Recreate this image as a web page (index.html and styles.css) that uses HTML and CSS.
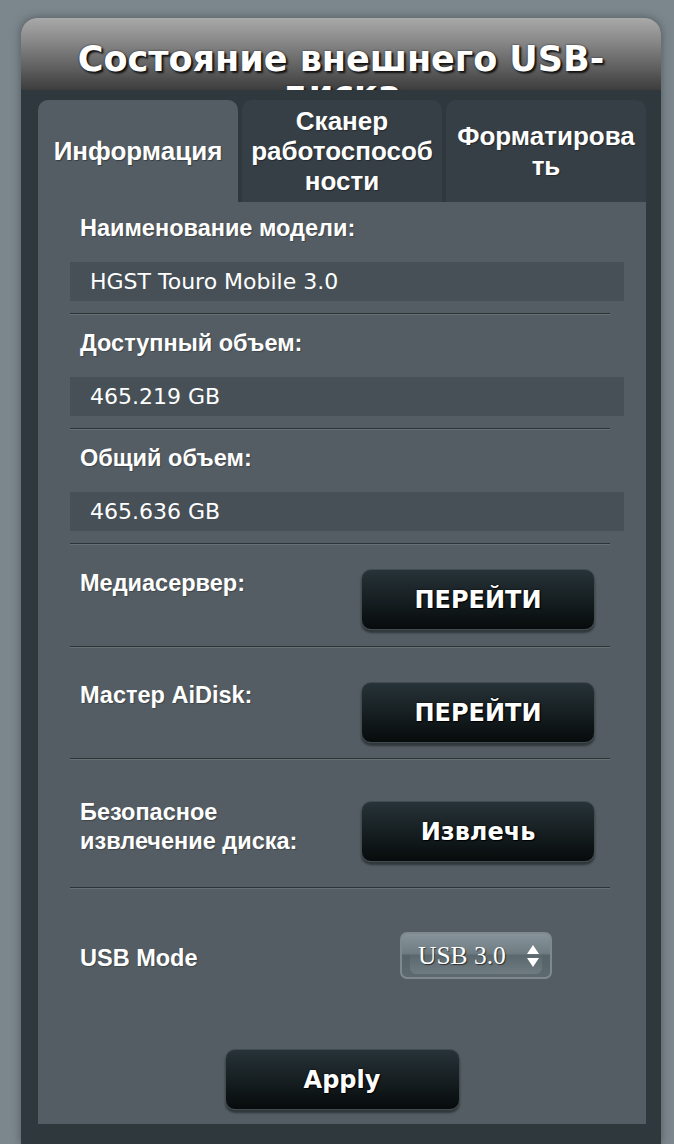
FILE: index.html
```html
<!DOCTYPE html>
<html lang="ru">
<head>
<meta charset="utf-8">
<title>Состояние внешнего USB-диска</title>
<link rel="stylesheet" href="styles.css">
</head>
<body>
<div class="panel">
  <div class="head">
    <h1 class="title">Состояние внешнего USB-диска</h1>
  </div>
  <div class="tabs">
    <div class="tab tab-active">Информация</div>
    <div class="tab">Сканер работоспособности</div>
    <div class="tab">Форматировать</div>
  </div>
  <div class="content">
    <div class="label">Наименование модели:</div>
    <div class="value">HGST Touro Mobile 3.0</div>
    <div class="sep"></div>

    <div class="label">Доступный объем:</div>
    <div class="value">465.219 GB</div>
    <div class="sep"></div>

    <div class="label">Общий объем:</div>
    <div class="value">465.636 GB</div>
    <div class="sep"></div>

    <div class="brow brow-media">
      <div class="blabel">Медиасервер:</div>
      <div class="btn">ПЕРЕЙТИ</div>
    </div>
    <div class="sep"></div>

    <div class="brow brow-aidisk">
      <div class="blabel">Мастер AiDisk:</div>
      <div class="btn">ПЕРЕЙТИ</div>
    </div>
    <div class="sep"></div>

    <div class="brow brow-eject">
      <div class="blabel blabel-two">Безопасное<br>извлечение диска:</div>
      <div class="btn">Извлечь</div>
    </div>
    <div class="sep"></div>

    <div class="brow brow-usb">
      <div class="blabel">USB Mode</div>
      <div class="select">
        <span class="select-text">USB 3.0</span>
        <svg class="select-arrows" width="14" height="24" viewBox="0 0 14 24">
          <path d="M7 1 L13 10 L1 10 Z" fill="#ffffff"/>
          <path d="M1 14 L13 14 L7 23 Z" fill="#ffffff"/>
        </svg>
      </div>
    </div>

    <div class="apply-row">
      <div class="btn btn-apply">Apply</div>
    </div>
  </div>
</div>
</body>
</html>
```

FILE: styles.css
```css
html, body {
  margin: 0;
  padding: 0;
}
body {
  background: #7c878d;
  width: 674px;
  height: 1144px;
  overflow: hidden;
  font-family: "Liberation Sans", Arial, sans-serif;
  color: #fff;
}
.panel {
  margin: 18px 0 0 21px;
  width: 640px;
  height: 1126px;
  background: #2f383d;
  border-radius: 16px 16px 0 0;
  box-shadow: 0 0 10px rgba(40, 50, 55, 0.55);
}
.head {
  height: 72px;
  overflow: hidden;
  border-radius: 16px 16px 0 0;
  background: linear-gradient(to bottom, #a9a9a9 0px, #8a8a8a 22px, #5c5c5c 52px, #3d3d3d 72px);
}
.title {
  margin: 0;
  padding: 24px 30px 0;
  font-family: "DejaVu Sans", Verdana, sans-serif;
  font-weight: bold;
  font-size: 35px;
  line-height: 35px;
  text-align: center;
  color: #fff;
  text-shadow: 2px 2px 2px #111, 0 0 2px #222;
}
.tabs {
  display: flex;
  gap: 4px;
  margin-top: 10px;
  padding: 0 15px 0 17px;
}
.tab {
  width: 200px;
  height: 102px;
  box-sizing: border-box;
  padding: 0 7px;
  border-radius: 10px 10px 0 0;
  background: #363f45;
  display: flex;
  align-items: center;
  justify-content: center;
  text-align: center;
  font-weight: bold;
  font-size: 26px;
  line-height: 30px;
  overflow-wrap: anywhere;
  text-shadow: 1px 1px 1px rgba(0, 0, 0, 0.35);
}
.tab-active {
  background: #535d63;
}
.content {
  margin: 0 15px 0 17px;
  height: 922px;
  box-sizing: border-box;
  background: #535d63;
  padding: 14px 22px 0 32px;
}
.label {
  padding-left: 10px;
  font-weight: bold;
  font-size: 23.5px;
  line-height: 24px;
  margin-top: 16px;
  text-shadow: 1px 1px 1px rgba(0, 0, 0, 0.25);
}
.content > .label:first-child {
  margin-top: 0;
}
.value {
  margin-top: 22px;
  height: 39px;
  background: #465056;
  padding-left: 20px;
  font-family: "DejaVu Sans", Verdana, sans-serif;
  font-size: 22px;
  line-height: 39px;
}
.sep {
  width: 540px;
  margin-top: 12px;
  border-top: 1px solid #2c3438;
  border-bottom: 1px solid #667075;
}
.brow {
  display: flex;
  align-items: flex-start;
}
.blabel {
  width: 281px;
  padding-left: 10px;
  font-weight: bold;
  font-size: 23.5px;
  line-height: 24px;
  text-shadow: 1px 1px 1px rgba(0, 0, 0, 0.25);
}
.blabel-two {
  line-height: 29px;
}
.brow-media {
  padding: 24px 0 4px;
}
.brow-media .blabel {
  margin-top: 2px;
}
.brow-aidisk {
  padding: 34px 0 3px;
}
.brow-aidisk .blabel {
  margin-top: 1px;
}
.brow-eject {
  padding: 41px 0 13px;
}
.brow-eject .blabel {
  margin-top: -3px;
}
.brow-usb {
  padding: 43px 0 0;
}
.brow-usb .blabel {
  margin-top: 14px;
}
.btn {
  width: 234px;
  height: 61px;
  box-sizing: border-box;
  border: 1px solid #414b50;
  border-radius: 10px;
  background: linear-gradient(to bottom, #273338 0%, #182124 45%, #070b0c 100%);
  box-shadow: 0 3px 2px rgba(20, 25, 28, 0.55);
  display: flex;
  align-items: center;
  justify-content: center;
  font-family: "DejaVu Sans", Verdana, sans-serif;
  font-weight: bold;
  font-size: 24px;
  color: #fff;
  text-shadow: 1px 1px 1px #000, 0 0 2px #000;
}
.select {
  margin-left: 39px;
  width: 152px;
  height: 47px;
  box-sizing: border-box;
  border: 2px solid #7f898d;
  border-radius: 7px;
  background: linear-gradient(to bottom, #86939a 0%, #6f7c82 45%, #56646a 50%, #5d6a70 100%);
  display: flex;
  align-items: center;
  padding: 0 10px 0 16px;
  position: relative;
}
.select::after {
  content: "";
  position: absolute;
  left: 8px;
  right: 8px;
  bottom: 3px;
  height: 20px;
  border-radius: 0 0 6px 6px;
  background: linear-gradient(to bottom, rgba(255, 255, 255, 0.02), rgba(255, 255, 255, 0.12));
}
.select-text {
  flex: 1;
  font-family: "Liberation Serif", "Times New Roman", serif;
  font-size: 25.5px;
  color: #fff;
  text-shadow: 1px 1px 1px rgba(0, 0, 0, 0.6);
  position: relative;
  z-index: 1;
}
.select-arrows {
  position: relative;
  z-index: 1;
}
.apply-row {
  display: flex;
  justify-content: center;
  margin-top: 70px;
  margin-left: -32px;
  margin-right: -22px;
}
.btn-apply {
  width: 235px;
}
```
